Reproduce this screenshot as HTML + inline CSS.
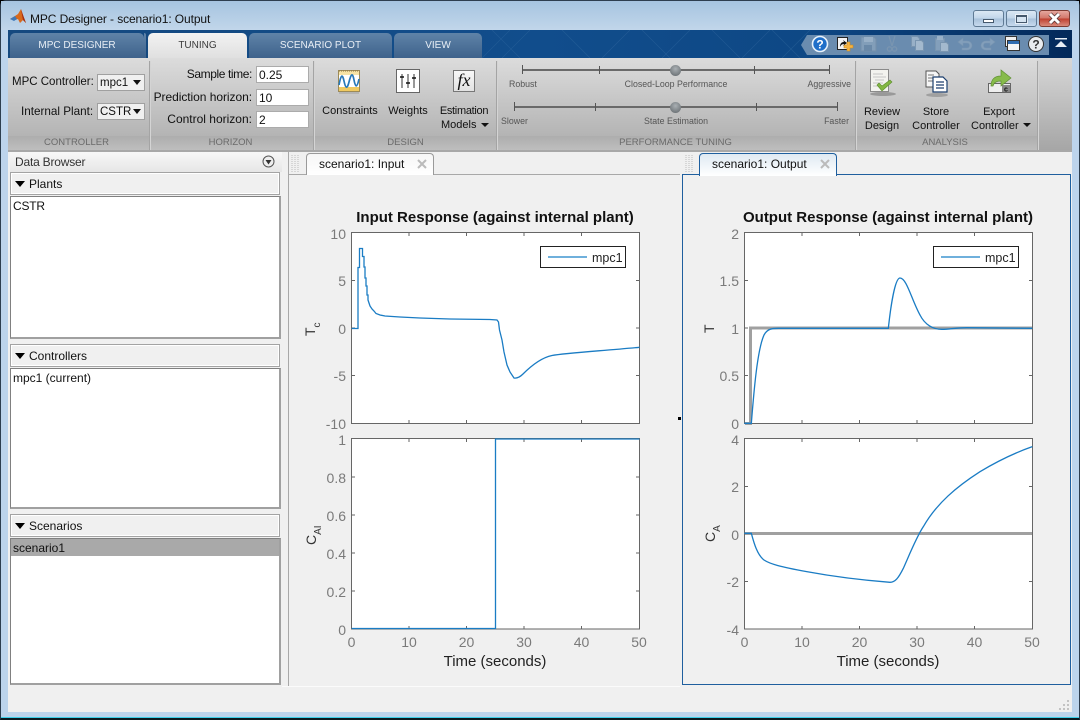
<!DOCTYPE html>
<html><head><meta charset="utf-8"><title>MPC Designer - scenario1: Output</title>
<style>
html,body{margin:0;padding:0;width:1080px;height:720px;overflow:hidden;background:#000}
*{box-sizing:border-box}
#w{position:absolute;left:0;top:0;width:1080px;height:720px;overflow:hidden;font:12px "Liberation Sans",sans-serif;color:#111}
.a{position:absolute}
.t{position:absolute;white-space:nowrap;line-height:14px}
.c{text-align:center}
.r{text-align:right}
.s{font-size:11px}
.sl{font-size:8.8px;color:#555;line-height:14px}
.tab{position:absolute;top:33px;height:25px;border-radius:5px 5px 0 0;background:linear-gradient(#5f83a8,#3e628b);color:#e8eef5;text-align:center;line-height:25px;font-size:10px}
.sep{position:absolute;top:61px;height:89px;background:#a4a4a4;border-right:1px solid #d4d4d4;width:2px}
.lab{position:absolute;top:136px;height:14px;line-height:14px;text-align:center;color:#6a6a6a;font-size:9.5px}
.inp{position:absolute;left:256px;width:53px;height:17px;background:#fff;border:1px solid #ababab;line-height:16px;padding-left:2px;font-size:12px}
.sel{position:absolute;left:97px;width:48px;height:17px;background:#f0f0f0;border:1px solid #a0a0a0;line-height:17px;padding-left:2px;font-size:11.5px}
.sel:after{content:"";position:absolute;right:3px;top:5px;border:4px solid transparent;border-top:5px solid #111}
.hdr{position:absolute;left:10px;width:270px;background:#f0f0f0;border:1px solid #a3a3a3;box-shadow:inset 0 0 0 1px #fff}
.tri{position:absolute;left:15px;width:0;height:0;border:5px solid transparent;border-top:6px solid #000;border-bottom:0}
.list{position:absolute;left:10px;width:271px;background:#fff;border-style:solid;border-width:1px 2px 2px 1px;border-color:#808080 #a0a0a0 #a0a0a0 #808080}
</style></head><body><div id="w">
<!-- window frame -->
<div class="a" style="left:0;top:0;width:1080px;height:720px;border-radius:6px 6px 0 0;background:linear-gradient(#b3cde6 0,#bdd4ec 30px,#bcd4ec 100%);border:1px solid #2d3e4f;border-bottom:2px solid #0b1a20"></div>
<div class="a" style="left:1px;top:717px;width:1078px;height:1px;background:#3dd0ea"></div>
<div class="a" style="left:1px;top:1px;width:1078px;height:29px;background:linear-gradient(#a6c4e0,#c1d6ea)"></div>
<svg class="a" style="left:9px;top:9px" width="18" height="17" viewBox="0 0 18 17"><path d="M1 10L6 7l3-2 3-5 2 6 3 8-3-3-3 3-2-4-3 1z" fill="#d8691c"/><path d="M1 10l5-3 2 3-3 2z" fill="#3f78b8"/><path d="M12 0l2 6 3 8-3-3-1-5z" fill="#a62f12"/></svg>
<div class="t" style="left:30px;top:12px;font-size:12px;letter-spacing:-.1px;color:#111">MPC Designer - scenario1: Output</div>
<!-- window controls -->
<div class="a" style="left:973px;top:10px;width:31px;height:17px;border:1px solid #5f7a94;border-radius:3px;background:linear-gradient(#dbe8f4 0,#c2d6ea 48%,#a8c1da 52%,#c6daee)"></div>
<div class="a" style="left:983px;top:19px;width:11px;height:4px;background:#fff;border:1px solid #45586c"></div>
<div class="a" style="left:1006px;top:10px;width:31px;height:17px;border:1px solid #5f7a94;border-radius:3px;background:linear-gradient(#dbe8f4 0,#c2d6ea 48%,#a8c1da 52%,#c6daee)"></div>
<div class="a" style="left:1016px;top:15px;width:11px;height:8px;background:#d6e4f1;border:1px solid #45586c;border-top-width:2px;outline:1px solid rgba(255,255,255,.6)"></div>
<div class="a" style="left:1039px;top:10px;width:31px;height:17px;border:1px solid #7c3b32;border-radius:3px;background:linear-gradient(#e5a79e 0,#d2776a 48%,#bf4030 52%,#d98b7c)"></div>
<svg class="a" style="left:1047px;top:12px" width="15" height="13" viewBox="0 0 15 13"><path d="M3 2l9 9M12 2l-9 9" stroke="#4d3030" stroke-width="4.4"/><path d="M3 2l9 9M12 2l-9 9" stroke="#fff" stroke-width="3"/></svg>
<!-- tab band -->
<div class="a" style="left:8px;top:30px;width:1064px;height:28px;background:linear-gradient(90deg,#15497f 0,#114d8c 50%,#0e4885 75%,#03295a 100%)"></div>
<svg class="a" style="left:482px;top:30px" width="340" height="28"><g stroke="#3a6ea5" stroke-width=".6" opacity=".45" fill="none"><path d="M0 28L28 0M20 28L48 0M120 28L148 0M180 28L208 0M260 28L288 0M300 28L328 0M10 0L38 28M80 0L108 28M160 0L188 28M230 0L258 28M290 0L318 28"/></g></svg>
<div class="tab" style="left:10px;width:134px">MPC DESIGNER</div>
<div class="tab" style="left:148px;width:99px;height:26px;background:linear-gradient(#f2f2f2,#dfdfdf);color:#3c3c3c">TUNING</div>
<div class="tab" style="left:249px;width:143px">SCENARIO PLOT</div>
<div class="tab" style="left:394px;width:88px">VIEW</div>
<div class="a" style="left:146px;top:33px;width:2px;height:25px;background:#15497f"></div>
<div class="a" style="left:144px;top:33px;width:2px;height:25px;border-radius:0 5px 0 0;background:linear-gradient(#5f83a8,#3e628b)"></div>
<!-- quick access -->
<div class="a" style="left:801px;top:35px;width:248px;height:20px;background:#6a8caf;clip-path:polygon(6px 0,100% 0,100% 100%,6px 100%,0 50%)"></div>
<svg class="a" style="left:801px;top:30px" width="270" height="28" viewBox="801 30 270 28">
<circle cx="820" cy="44" r="7.5" fill="#1f6fc9" stroke="#e8f2fb" stroke-width="1.6"/><text x="820" y="48.5" font-family="Liberation Sans" font-weight="700" font-size="12" fill="#fff" text-anchor="middle">?</text>
<rect x="837.500" y="37.500" width="10" height="12" fill="#f4f4f4" stroke="#222"/><path d="M840 47c0-4 2-5 4-5l-1-2 4 3-4 3 1-2c-2 0-3 1-4 3z" fill="#111"/><path d="M847 42h3v3h3v3h-3v3h-3v-3h-3v-3h3z" fill="#f5b342" stroke="#c98a1e" stroke-width=".6"/>
<g opacity=".75"><path d="M861 37h13l2 2v12h-15z" fill="#8aa4bd" stroke="#7891a9"/><rect x="864" y="37" width="9" height="5" fill="#a8bdd0"/><rect x="864" y="45" width="8" height="6" fill="#6b89a6"/>
<path d="M889 36l3 10M895 36l-3 10" stroke="#7e98b1" stroke-width="1.3"/><circle cx="889.500" cy="49" r="2.2" fill="none" stroke="#7e98b1" stroke-width="1.3"/><circle cx="894.500" cy="49" r="2.2" fill="none" stroke="#7e98b1" stroke-width="1.3"/>
<path d="M911.500 36.500h6l2 2v8h-8z" fill="#a8bdd0" stroke="#7e98b1"/><path d="M915.500 40.500h6l2 2v8h-8z" fill="#b7c9d9" stroke="#7e98b1"/>
<path d="M935.500 38.500h9v12h-9z" fill="#8ca6bf" stroke="#7e98b1"/><rect x="937" y="36" width="6" height="4" fill="#a8bdd0"/><path d="M940.500 42.500h6l2 2v7h-8z" fill="#b7c9d9" stroke="#7e98b1"/>
<path d="M958 42l5-4v3h4c3 0 5 2 5 4.500s-2 4.500-5 4.500h-5v-2h5c1.500 0 2.500-1 2.500-2.500s-1-2.500-2.500-2.500h-4v3z" fill="#8ca6bf" stroke="#7e98b1" stroke-width=".6"/>
<path d="M995 42l-5-4v3h-4c-3 0-5 2-5 4.500s2 4.500 5 4.500h5v-2h-5c-1.500 0-2.500-1-2.500-2.500s1-2.500 2.500-2.500h4v3z" fill="#8ca6bf" stroke="#7e98b1" stroke-width=".6"/></g>
<rect x="1005.500" y="36.500" width="11" height="10" fill="#f0f0f0" stroke="#333"/><rect x="1007.500" y="40.500" width="12" height="10" fill="#f4f4f4" stroke="#333"/><rect x="1008" y="41" width="11" height="3" fill="#2f6cb0"/>
<circle cx="1036" cy="44" r="7.5" fill="#e9ecef" stroke="#333" stroke-width="1"/><text x="1036" y="48.500" font-family="Liberation Sans" font-weight="700" font-size="12" fill="#333" text-anchor="middle">?</text>
<rect x="1055" y="38" width="12" height="1.500" fill="#e6edf4"/><path d="M1055 47l6-6 6 6z" fill="#e6edf4"/>
</svg>
<!-- toolstrip -->
<div class="a" style="left:8px;top:58px;width:1064px;height:78px;background:linear-gradient(#dcdcdc,#b4b4b4)"></div>
<div class="a" style="left:8px;top:136px;width:1029px;height:14px;background:linear-gradient(#adadad,#bebebe)"></div>
<div class="a" style="left:1037px;top:58px;width:35px;height:92px;background:linear-gradient(#d8d8d8,#a6a6a6)"></div>
<div class="sep" style="left:149px"></div><div class="sep" style="left:313px"></div><div class="sep" style="left:496px"></div><div class="sep" style="left:855px"></div><div class="sep" style="left:1037px"></div>
<div class="lab" style="left:6px;width:141px">CONTROLLER</div>
<div class="lab" style="left:150px;width:161px">HORIZON</div>
<div class="lab" style="left:315px;width:181px">DESIGN</div>
<div class="lab" style="left:497px;width:357px">PERFORMANCE TUNING</div>
<div class="lab" style="left:855px;width:180px">ANALYSIS</div>
<!-- controller -->
<div class="t" style="left:12px;top:75px;font-size:11.5px">MPC Controller:</div>
<div class="sel" style="top:74px">mpc1</div>
<div class="t" style="left:21px;top:105px;font-size:11.7px">Internal Plant:</div>
<div class="sel" style="top:103px">CSTR</div>
<!-- horizon -->
<div class="t r" style="left:150px;width:102px;top:67px;letter-spacing:-.4px">Sample time:</div><div class="inp" style="top:66px">0.25</div>
<div class="t r" style="left:150px;width:102px;top:90px;letter-spacing:-.05px">Prediction horizon:</div><div class="inp" style="top:89px">10</div>
<div class="t r" style="left:150px;width:102px;top:112px">Control horizon:</div><div class="inp" style="top:111px">2</div>
<!-- design icons -->
<svg class="a" style="left:338px;top:70px" width="23" height="24" viewBox="0 0 23 24"><rect x=".5" y=".5" width="21" height="21" fill="#fff" stroke="#9c8a58"/><rect x="1" y="1" width="20" height="4" fill="#f6e3a6"/><path d="M1 1h20" stroke="#8f7a42" stroke-dasharray="1 1"/><rect x="1" y="17" width="20" height="4" fill="#f0ca60"/><path d="M1 15c2-11 3.500-11 5-4s3 9 5 1 3.500-10 5-2 3 8 5-1" fill="none" stroke="#2878b8" stroke-width="1.700"/><rect x="1" y="22" width="20" height="2" fill="#b5b5b5"/></svg>
<div class="t c s" style="left:315px;width:70px;top:104px">Constraints</div>
<svg class="a" style="left:396px;top:69px" width="25" height="25" viewBox="0 0 25 25"><rect x=".5" y=".5" width="23" height="23" fill="#fff" stroke="#666"/><path d="M6 5v14M12 5v14M18 5v14" stroke="#333"/><path d="M4 8h4M10 14h4M16 9h4" stroke="#111" stroke-width="1.4"/></svg>
<div class="t c s" style="left:383px;width:50px;top:104px">Weights</div>
<div class="a" style="left:453px;top:70px;width:22px;height:22px;background:linear-gradient(#f8f8f8,#e2e2e2);border:1px solid #777"></div>
<div class="t c" style="left:453px;width:22px;top:72px;font:italic 18px/17px 'Liberation Serif',serif">fx</div>
<div class="t c s" style="left:435px;width:58px;top:104px;letter-spacing:-.3px">Estimation</div>
<div class="t s" style="left:441px;top:118px">Models</div>
<div class="a" style="left:481px;top:123px;border:4px solid transparent;border-top:4px solid #111"></div>
<!-- sliders -->
<div class="a" style="left:522px;top:69px;width:308px;height:2px;background:#6a6a6a"></div>
<div class="a" style="left:522px;top:65px;width:1px;height:9px;background:#555"></div><div class="a" style="left:599px;top:66px;width:1px;height:8px;background:#555"></div><div class="a" style="left:754px;top:66px;width:1px;height:8px;background:#555"></div><div class="a" style="left:829px;top:65px;width:1px;height:9px;background:#555"></div>
<div class="a" style="left:670px;top:65px;width:11px;height:11px;border-radius:50%;background:radial-gradient(circle at 50% 35%,#aab0b4,#5e6468)"></div>
<div class="t sl" style="left:509px;top:77px">Robust</div>
<div class="t c sl" style="left:606px;width:140px;top:77px">Closed-Loop Performance</div>
<div class="t r sl" style="left:780px;width:71px;top:77px">Aggressive</div>
<div class="a" style="left:514px;top:106px;width:323px;height:2px;background:#6a6a6a"></div>
<div class="a" style="left:514px;top:102px;width:1px;height:9px;background:#555"></div><div class="a" style="left:595px;top:103px;width:1px;height:8px;background:#555"></div><div class="a" style="left:756px;top:103px;width:1px;height:8px;background:#555"></div><div class="a" style="left:837px;top:102px;width:1px;height:9px;background:#555"></div>
<div class="a" style="left:670px;top:102px;width:11px;height:11px;border-radius:50%;background:radial-gradient(circle at 50% 35%,#aab0b4,#5e6468)"></div>
<div class="t sl" style="left:501px;top:114px">Slower</div>
<div class="t c sl" style="left:606px;width:140px;top:114px">State Estimation</div>
<div class="t r sl" style="left:790px;width:59px;top:114px">Faster</div>
<!-- analysis -->
<svg class="a" style="left:868px;top:68px" width="30" height="30" viewBox="0 0 30 30"><ellipse cx="15" cy="26" rx="13" ry="2" fill="#999"/><rect x="2.500" y="1.500" width="18" height="22" fill="#f3f3ef" stroke="#8a8a8a"/><path d="M5 6h10M5 9h13M7 12h9M5 15h10M5 18h6" stroke="#c4c4c4"/><path d="M9 17l5 6 10-9-2-2-8 6-3-3z" fill="#83b743" stroke="#5c8e2d" stroke-width=".6"/></svg>
<div class="t c s" style="left:857px;width:50px;top:105px">Review</div><div class="t c s" style="left:857px;width:50px;top:119px">Design</div>
<svg class="a" style="left:925px;top:70px" width="24" height="28" viewBox="0 0 24 28"><ellipse cx="12" cy="25" rx="11" ry="2" fill="#a0a0a0"/><path d="M1 1h10l3 3v13H1z" fill="#f6f6f6" stroke="#555"/><path d="M3 5h6M3 8h8M3 11h7" stroke="#777"/><path d="M8 7h10l4 4v11H8z" fill="#fff" stroke="#1c3f6e" stroke-width="1.200"/><path d="M11 12h8M11 15h8M11 18h8" stroke="#1c3f6e" stroke-width="1.200"/></svg>
<div class="t c s" style="left:906px;width:60px;top:105px">Store</div><div class="t c s" style="left:906px;width:60px;top:119px">Controller</div>
<svg class="a" style="left:987px;top:68px" width="26" height="28" viewBox="0 0 26 28"><rect x="1.500" y="15.500" width="22" height="9" fill="#eee" stroke="#666"/><rect x="15" y="17" width="8" height="7" fill="#888"/><text x="19" y="23.500" font-family="Liberation Sans" font-weight="700" font-size="7" fill="#111" text-anchor="middle">c</text><path d="M4 18c0-7 4-10 10-10V2l10 8-10 8v-5c-4 0-7 1-8 5z" fill="#87bb4b" stroke="#5f8f33" stroke-width=".7"/></svg>
<div class="t c s" style="left:969px;width:60px;top:105px">Export</div><div class="t s" style="left:971px;top:119px">Controller</div>
<div class="a" style="left:1023px;top:123px;border:4px solid transparent;border-top:4px solid #111"></div>
<!-- content area -->
<div class="a" style="left:8px;top:150px;width:1064px;height:562px;background:#f0f0f0;border-top:2px solid #a8a8a8"></div>
<!-- left panel -->
<div class="a" style="left:10px;top:152px;width:272px;height:20px;background:linear-gradient(#f8f8f8,#e6e6e6)"></div>
<div class="t" style="left:15px;top:155px;color:#333;letter-spacing:-.2px">Data Browser</div>
<svg class="a" style="left:262px;top:155px" width="13" height="13"><circle cx="6.500" cy="6.500" r="5.500" fill="#eee" stroke="#555"/><path d="M3.500 5h6l-3 4.500z" fill="#333"/></svg>
<div class="hdr" style="top:172px;height:23px"></div><div class="tri" style="top:181px"></div><div class="t" style="left:29px;top:177px">Plants</div>
<div class="list" style="top:196px;height:143px"></div><div class="t" style="left:13px;top:199px;letter-spacing:-.2px">CSTR</div>
<div class="hdr" style="top:344px;height:23px"></div><div class="tri" style="top:353px"></div><div class="t" style="left:29px;top:349px">Controllers</div>
<div class="list" style="top:368px;height:141px"></div><div class="t" style="left:13px;top:371px">mpc1 (current)</div>
<div class="hdr" style="top:514px;height:23px"></div><div class="tri" style="top:523px"></div><div class="t" style="left:29px;top:519px">Scenarios</div>
<div class="list" style="top:538px;height:147px"></div><div class="a" style="left:11px;top:539px;width:268px;height:17px;background:#a9a9a9"></div><div class="t" style="left:13px;top:541px">scenario1</div>
<!-- panel separators -->
<div class="a" style="left:288px;top:152px;width:1px;height:534px;background:#a8a8a8"></div>
<div class="a" style="left:289px;top:174px;width:391px;height:1px;background:#a8a8a8"></div>
<div class="a" style="left:282px;top:686px;width:398px;height:1px;background:#fbfbfb"></div>
<div class="a" style="left:678px;top:417px;width:3px;height:3px;background:#000"></div>
<svg class="a" style="left:290px;top:154px" width="12" height="19"><path d="M2 1v18M5 1v18M8 1v18" stroke="#bbb" stroke-dasharray="1 1"/></svg>
<div class="a" style="left:306px;top:153px;width:128px;height:22px;background:linear-gradient(#f6f6f6,#fff);border:1px solid #9a9a9a;border-bottom:0;border-radius:4px 4px 0 0"></div>
<div class="t" style="left:319px;top:157px">scenario1: Input</div>
<svg class="a" style="left:417px;top:159px" width="10" height="10"><path d="M1 1l8 8M9 1l-8 8" stroke="#bbb" stroke-width="2"/></svg>
<div class="a" style="left:682px;top:174px;width:389px;height:511px;border:1px solid #1f5f9e"></div>
<svg class="a" style="left:684px;top:154px" width="12" height="19"><path d="M2 1v18M5 1v18M8 1v18" stroke="#bbb" stroke-dasharray="1 1"/></svg>
<div class="a" style="left:699px;top:153px;width:138px;height:23px;background:linear-gradient(#dfe9f2,#fff);border:1px solid #1f5f9e;border-bottom:0;border-radius:4px 4px 0 0"></div>
<div class="t" style="left:712px;top:157px">scenario1: Output</div>
<svg class="a" style="left:820px;top:159px" width="10" height="10"><path d="M1 1l8 8M9 1l-8 8" stroke="#bbb" stroke-width="2"/></svg>
<svg class="a" style="left:1058px;top:699px" width="14" height="13"><g fill="#c3c3c3"><rect x="9" y="1" width="2" height="2"/><rect x="5" y="5" width="2" height="2"/><rect x="9" y="5" width="2" height="2"/><rect x="1" y="9" width="2" height="2"/><rect x="5" y="9" width="2" height="2"/><rect x="9" y="9" width="2" height="2"/></g></svg>
<!-- plots -->
<svg class="a" style="left:0;top:0" width="1080" height="720" viewBox="0 0 1080 720" font-family="Liberation Sans" font-size="14" fill="#7a7a7a">
<g fill="#fff" stroke="#666"><rect x="351.500" y="232.500" width="288" height="191"/><rect x="351.500" y="438.500" width="288" height="190.500"/><rect x="744.500" y="232.500" width="288" height="191"/><rect x="744.500" y="438.500" width="288" height="190.500"/></g>
<!-- ticks -->
<g stroke="#666" fill="none">
<path d="M409 233v3M466.500 233v3M524 233v3M581.500 233v3M409 423v-3M466.500 423v-3M524 423v-3M581.500 423v-3M352 280.500h3M352 328h3M352 375.500h3M639 280.500h-3M639 328h-3M639 375.500h-3"/>
<path d="M409 439v3M466.500 439v3M524 439v3M581.500 439v3M409 629v-3M466.500 629v-3M524 629v-3M581.500 629v-3M352 477h3M352 515h3M352 553h3M352 591h3M639 477h-3M639 515h-3M639 553h-3M639 591h-3"/>
<path d="M802 233v3M859.500 233v3M917 233v3M974.500 233v3M802 423v-3M859.500 423v-3M917 423v-3M974.500 423v-3M745 280.500h3M745 328h3M745 375.500h3M1032 280.500h-3M1032 328h-3M1032 375.500h-3"/>
<path d="M802 439v3M859.500 439v3M917 439v3M974.500 439v3M802 629v-3M859.500 629v-3M917 629v-3M974.500 629v-3M745 486.500h3M745 534h3M745 581.500h3M1032 486.500h-3M1032 534h-3M1032 581.500h-3"/>
</g>
<!-- reference lines -->
<path d="M745 423.500h5.500V328H1032" fill="none" stroke="#a0a0a0" stroke-width="3"/>
<path d="M745 533.500H1032" fill="none" stroke="#a0a0a0" stroke-width="3"/>
<!-- curves -->
<g fill="none" stroke="#1a7cc4" stroke-width="1.300">
<path d="M351.700 328.500H358V267.500H359.500V248.500H362.500V256.500H364V267H365V278H366V286H367V295H368V300L369 303L370 306L372 309L374 311L376 313.500L380 315L385 316L400 317L420 318L450 319L490 319.500L497 320L498.500 322L499.500 330L502 340L504 352L507 365L510 372L514 378C517 378.500 520 377 523 374C530 367 540 358 552 355.500C565 353 600 351 639.500 347.300"/>
<path d="M351.700 628.500H495.500V439H639.500"/>
<path transform="translate(680 150) scale(.33333)" vector-effect="non-scaling-stroke" d="M193 820H214C222 720 232 600 252 555C262 537 275 535 295 535H625C632 470 645 384 660 384C680 384 695 450 720 495C735 525 760 538 785 538C810 538 830 533 860 533L1057 535"/>
<path transform="translate(680 430) scale(.33333)" vector-effect="non-scaling-stroke" d="M193 310H214C222 340 232 375 252 390C270 402 300 410 380 425C450 438 540 450 630 457C645 457 655 445 670 415C690 370 710 320 730 290C770 220 830 170 900 125C950 95 1000 70 1057 50"/>
</g>
<!-- legends -->
<g fill="#fff" stroke="#222"><rect x="540.500" y="246.500" width="85" height="21"/><rect x="933.500" y="246.500" width="85" height="21"/></g>
<path d="M548 257h39M941 257h39" stroke="#6fb0dc" stroke-width="2"/>
<g font-size="12.500" fill="#222"><text x="592" y="262">mpc1</text><text x="985" y="262">mpc1</text></g>
<!-- titles -->
<g font-weight="700" font-size="15" fill="#111" text-anchor="middle"><text x="495" y="222">Input Response (against internal plant)</text><text x="888" y="222">Output Response (against internal plant)</text></g>
<!-- y tick labels -->
<g text-anchor="end">
<text x="346" y="239">10</text><text x="346" y="286">5</text><text x="346" y="334">0</text><text x="346" y="381">-5</text><text x="346" y="429">-10</text>
<text x="346" y="445">1</text><text x="346" y="483">0.8</text><text x="346" y="521">0.6</text><text x="346" y="559">0.4</text><text x="346" y="597">0.2</text><text x="346" y="635">0</text>
<text x="739" y="239">2</text><text x="739" y="286">1.5</text><text x="739" y="334">1</text><text x="739" y="381">0.5</text><text x="739" y="429">0</text>
<text x="739" y="445">4</text><text x="739" y="492">2</text><text x="739" y="540">0</text><text x="739" y="587">-2</text><text x="739" y="635">-4</text>
</g>
<!-- x tick labels -->
<g text-anchor="middle">
<text x="351.500" y="647">0</text><text x="409" y="647">10</text><text x="466.500" y="647">20</text><text x="524" y="647">30</text><text x="581.500" y="647">40</text><text x="639" y="647">50</text>
<text x="744.500" y="647">0</text><text x="802" y="647">10</text><text x="859.500" y="647">20</text><text x="917" y="647">30</text><text x="974.500" y="647">40</text><text x="1032" y="647">50</text>
</g>
<g font-size="15" fill="#222" text-anchor="middle"><text x="495" y="666">Time (seconds)</text><text x="888" y="666">Time (seconds)</text></g>
<!-- y labels -->
<g fill="#333">
<text transform="translate(315 336) rotate(-90)" font-size="14">T<tspan font-size="10" dy="5">c</tspan></text>
<text transform="translate(316 545) rotate(-90)" font-size="14">C<tspan font-size="10" dy="5">AI</tspan></text>
<text transform="translate(714 333) rotate(-90)" font-size="14">T</text>
<text transform="translate(715 542) rotate(-90)" font-size="14">C<tspan font-size="10" dy="5">A</tspan></text>
</g>
</svg>
</div></body></html>
